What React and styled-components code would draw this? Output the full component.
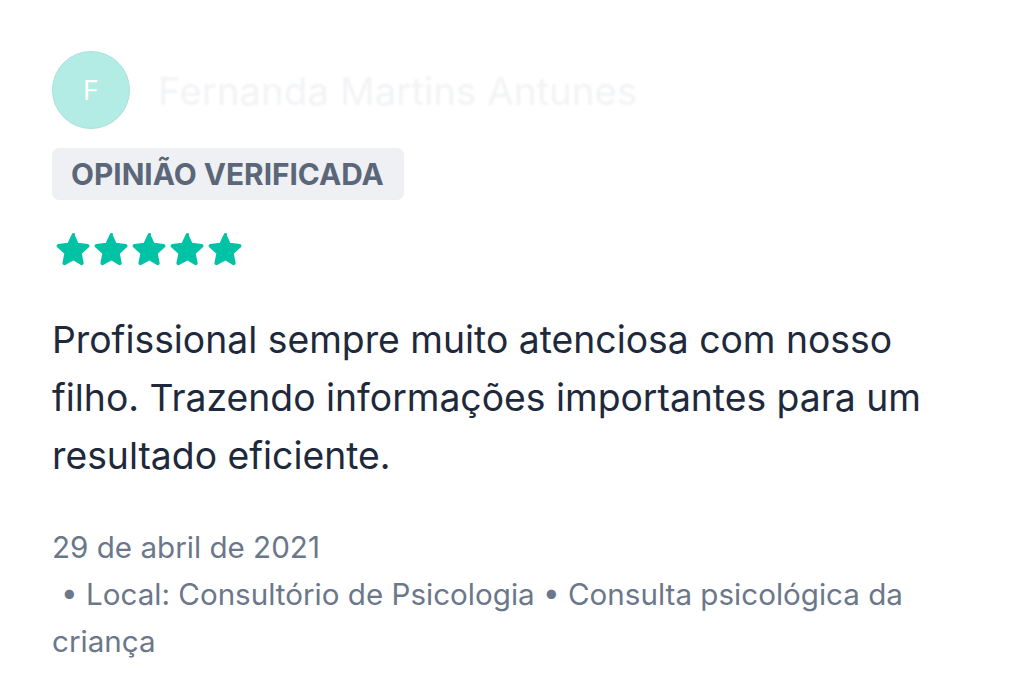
import React from "react"
import styled, { createGlobalStyle } from "styled-components"

const Global = createGlobalStyle`
  html, body {
    margin: 0;
    padding: 0;
    background: #ffffff;
    font-family: Inter, "Liberation Sans", Arial, sans-serif;
  }
`

const Card = styled.div`
  width: 920px;
  padding: 51px 0 0 52px;
  display: flex;
  flex-direction: column;
`

const Header = styled.div`
  display: flex;
  align-items: center;
  gap: 28px;
`

const Avatar = styled.div`
  width: 76px;
  height: 76px;
  border-radius: 50%;
  background: #b3ece4;
  border: 1px solid #a6e2d9;
  color: #ffffff;
  font-size: 27px;
  display: flex;
  align-items: center;
  justify-content: center;
`

const Name = styled.div`
  font-size: 38.5px;
  color: #f2f3f5;
  filter: blur(1px);
  margin-top: 2px;
`

const Badge = styled.div`
  align-self: flex-start;
  margin-top: 19px;
  height: 52px;
  padding: 0 20px 0 19px;
  background: #eef0f4;
  border-radius: 7px;
  display: flex;
  align-items: center;
  font-size: 29.8px;
  font-weight: 700;
  color: #5b6778;
`

const Stars = styled.div`
  display: flex;
  gap: 1px;
  margin-top: 31px;
  margin-left: 3px;
`

const Text = styled.p`
  margin: 44px 0 0;
  font-size: 37.3px;
  line-height: 58px;
  color: #1e293b;
`

const Meta = styled.p`
  margin: 39px 0 0;
  font-size: 29.6px;
  line-height: 47px;
  color: #6b778a;
`

const Place = styled.span`
  padding-left: 9px;
`

const Star = () => (
  <svg width="37" height="36" viewBox="0 0 24 24">
    <path
      d="M12 2.2l2.9 6.1 6.6.8c.6.1.9.9.4 1.3l-4.9 4.5 1.3 6.5c.1.6-.6 1.1-1.1.8L12 19l-5.8 3.2c-.5.3-1.2-.2-1.1-.8l1.3-6.5L1.5 10.4c-.5-.4-.2-1.2.4-1.3l6.6-.8L11.4 2.2c.2-.5 1-.5 1.2 0z"
      fill="#00c3a5"
      stroke="#00c3a5"
      strokeWidth="1"
      strokeLinejoin="round"
    />
  </svg>
)

const App = () => (
  <>
    <Global />
    <Card>
      <Header>
        <Avatar>F</Avatar>
        <Name>Fernanda Martins Antunes</Name>
      </Header>
      <Badge>OPINIÃO VERIFICADA</Badge>
      <Stars>
        {[0, 1, 2, 3, 4].map((i) => <Star key={i} />)}
      </Stars>
      <Text>
        Profissional sempre muito atenciosa com nosso filho. Trazendo informações importantes para um resultado eficiente.
      </Text>
      <Meta>
        29 de abril de 2021
        <br />
        <Place>• Local: Consultório de Psicologia • Consulta psicológica da criança</Place>
      </Meta>
    </Card>
  </>
)

export default App
